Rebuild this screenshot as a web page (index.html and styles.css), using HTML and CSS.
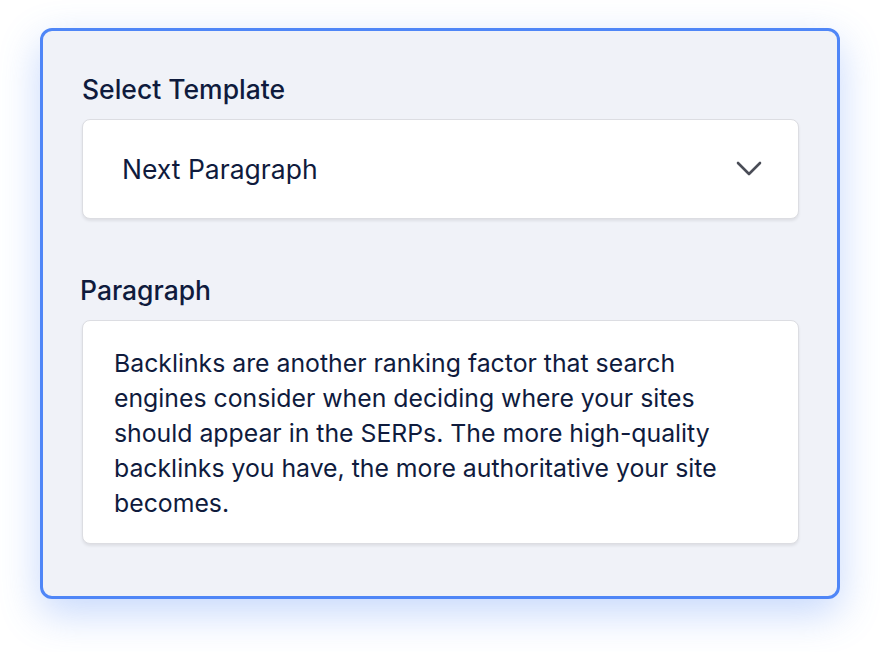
FILE: index.html
```html
<!DOCTYPE html>
<html lang="en">
<head>
    <meta charset="UTF-8">
    <title>Select Template</title>
    <link rel="stylesheet" href="styles.css">
</head>
<body>
    <div class="card">
        <label class="field-label" for="template">Select Template</label>
        <div class="select-box" id="template">
            <span>Next Paragraph</span>
            <svg class="chevron" width="26" height="16" viewBox="0 0 26 16">
                <path d="M2 2 L13 13 L24 2" fill="none" stroke="#4a4d57" stroke-width="2.6" stroke-linecap="round" stroke-linejoin="round"/>
            </svg>
        </div>

        <label class="field-label para-label" for="paragraph">Paragraph</label>
        <div class="text-box" id="paragraph">
            Backlinks are another ranking factor that search engines consider when deciding where your sites should appear in the SERPs. The more high-quality backlinks you have, the more authoritative your site becomes.
        </div>
    </div>
</body>
</html>
```

FILE: styles.css
```css
html, body {
    min-height: 652px;
}
body {
    margin: 0;
    padding: 28px 0 53px 40px;
    box-sizing: border-box;
    background-color: #fff;
    font-family: Inter, "Noto Sans", sans-serif;
    color: #0f1b3d;
}
.card {
    width: 800px;
    height: 571px;
    padding: 42px 38px 0 39px;
    box-sizing: border-box;
    background-color: #f0f2f8;
    border: 3px solid #4f86f7;
    border-radius: 12px;
    box-shadow: 0px 14px 40px rgba(79, 134, 247, 0.32);
}
.field-label {
    display: block;
    font-size: 26.5px;
    font-weight: 500;
    margin: 0 0 14px 0;
    line-height: 32px;
}
.para-label {
    margin-left: -2px;
    margin-top: 55px;
    margin-bottom: 14px;
}
.select-box {
    display: flex;
    align-items: center;
    justify-content: space-between;
    height: 100px;
    padding: 0 36px 0 39px;
    box-sizing: border-box;
    background-color: #fff;
    border: 1px solid #dcdde2;
    border-radius: 8px;
    box-shadow: 0px 2px 3px rgba(0, 0, 0, 0.08);
    font-size: 26.5px;
}
.text-box {
    height: 224px;
    padding: 25px 40px 0 31px;
    box-sizing: border-box;
    background-color: #fff;
    border: 1px solid #dcdde2;
    border-radius: 8px;
    box-shadow: 0px 2px 3px rgba(0, 0, 0, 0.08);
    font-size: 24.8px;
    line-height: 35px;
}
```
